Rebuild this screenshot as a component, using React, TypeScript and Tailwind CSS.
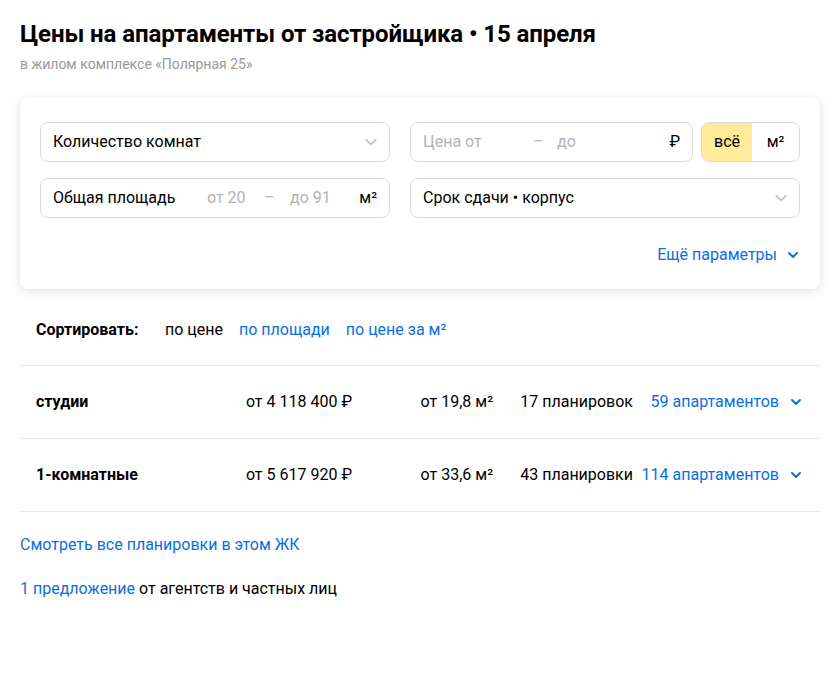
import { ChevronDown } from 'lucide-react';

const rows = [
  { name: 'студии', price: 'от 4 118 400 ₽', area: 'от 19,8 м²', plans: '17 планировок', link: '59 апартаментов' },
  { name: '1-комнатные', price: 'от 5 617 920 ₽', area: 'от 33,6 м²', plans: '43 планировки', link: '114 апартаментов' },
];

function Chevron({ className }: { className?: string }) {
  return (
    <svg viewBox="0 0 16 16" className={className} fill="none" stroke="currentColor" strokeWidth="2" strokeLinecap="round" strokeLinejoin="round">
      <path d="M4 6l4 4 4-4" />
    </svg>
  );
}

export default function App() {
  return (
    <div className="w-[840px] h-[700px] bg-white text-black px-5 pt-[18px]" style={{ fontFamily: 'Roboto, "Liberation Sans", sans-serif' }}>
      <h1 className="text-[24px] leading-8 font-bold tracking-[-0.1px]">Цены на апартаменты от застройщика • 15 апреля</h1>
      <div className="text-[14px] leading-5 text-[#999] mt-[4px]">в жилом комплексе «Полярная 25»</div>

      <div className="mt-[24px] rounded-lg bg-white shadow-[0_2px_12px_rgba(0,0,0,0.12)] px-5 pt-6 pb-[22px]">
        <div className="grid grid-cols-[350px_1fr] gap-x-5 gap-y-4">
          <div className="h-10 rounded-lg border border-[#d9d9d9] flex items-center pl-3 pr-2 text-[16px]">
            <span className="flex-1">Количество комнат</span>
            <ChevronDown className="w-5 h-5 text-[#b3b3b3]" strokeWidth={1.5} />
          </div>
          <div className="flex gap-2">
            <div className="flex-1 h-10 rounded-lg border border-[#d9d9d9] flex items-center pl-3 pr-3 text-[16px]">
              <span className="w-[110px] text-[#b3b3b3]">Цена от</span>
              <span className="text-[#b3b3b3] w-[24px]">–</span>
              <span className="flex-1 text-[#b3b3b3]">до</span>
              <span>₽</span>
            </div>
            <div className="w-[99px] h-10 rounded-lg border border-[#d9d9d9] flex overflow-hidden text-[16px]">
              <div className="w-[50px] bg-[#ffeb99] flex items-center justify-center">всё</div>
              <div className="flex-1 flex items-center justify-center">м²</div>
            </div>
          </div>
          <div className="h-10 rounded-lg border border-[#d9d9d9] flex items-center pl-3 pr-3 text-[16px]">
            <span className="w-[154px]">Общая площадь</span>
            <span className="w-[57px] text-[#b3b3b3]">от 20</span>
            <span className="w-[26px] text-[#b3b3b3]">–</span>
            <span className="flex-1 text-[#b3b3b3]">до 91</span>
            <span>м²</span>
          </div>
          <div className="h-10 rounded-lg border border-[#d9d9d9] flex items-center pl-3 pr-2 text-[16px]">
            <span className="flex-1">Срок сдачи • корпус</span>
            <ChevronDown className="w-5 h-5 text-[#b3b3b3]" strokeWidth={1.5} />
          </div>
        </div>
        <div className="flex justify-end items-center mt-[25px] text-[16px] text-[#0a6fe0]">
          <span>Ещё параметры</span>
          <Chevron className="w-4 h-4 ml-[8px] mr-[-1px]" />
        </div>
      </div>

      <div className="flex items-center h-[77px] pl-4 pt-[6px] text-[16px] border-b border-[#e6e6e6]">
        <span className="font-bold w-[129px]">Сортировать:</span>
        <span className="mr-4">по цене</span>
        <span className="text-[#0a6fe0] mr-4">по площади</span>
        <span className="text-[#0a6fe0]">по цене за м²</span>
      </div>

      {rows.map((r) => (
        <div key={r.name} className="flex items-center h-[73px] pl-4 text-[16px] border-b border-[#e6e6e6]">
          <span className="font-bold w-[200px]">{r.name}</span>
          <span className="w-[116px] text-right">{r.price}</span>
          <span className="w-[141px] text-right">{r.area}</span>
          <span className="w-[140px] text-right">{r.plans}</span>
          <span className="w-[146px] text-right text-[#0a6fe0]">{r.link}</span>
          <Chevron className="w-4 h-4 ml-[9px] text-[#0a6fe0]" />
        </div>
      ))}

      <div className="text-[16px] text-[#0a6fe0] mt-[21px]">Смотреть все планировки в этом ЖК</div>
      <div className="text-[16px] mt-[20px]">
        <span className="text-[#0a6fe0]">1 предложение</span> от агентств и частных лиц
      </div>
    </div>
  );
}
